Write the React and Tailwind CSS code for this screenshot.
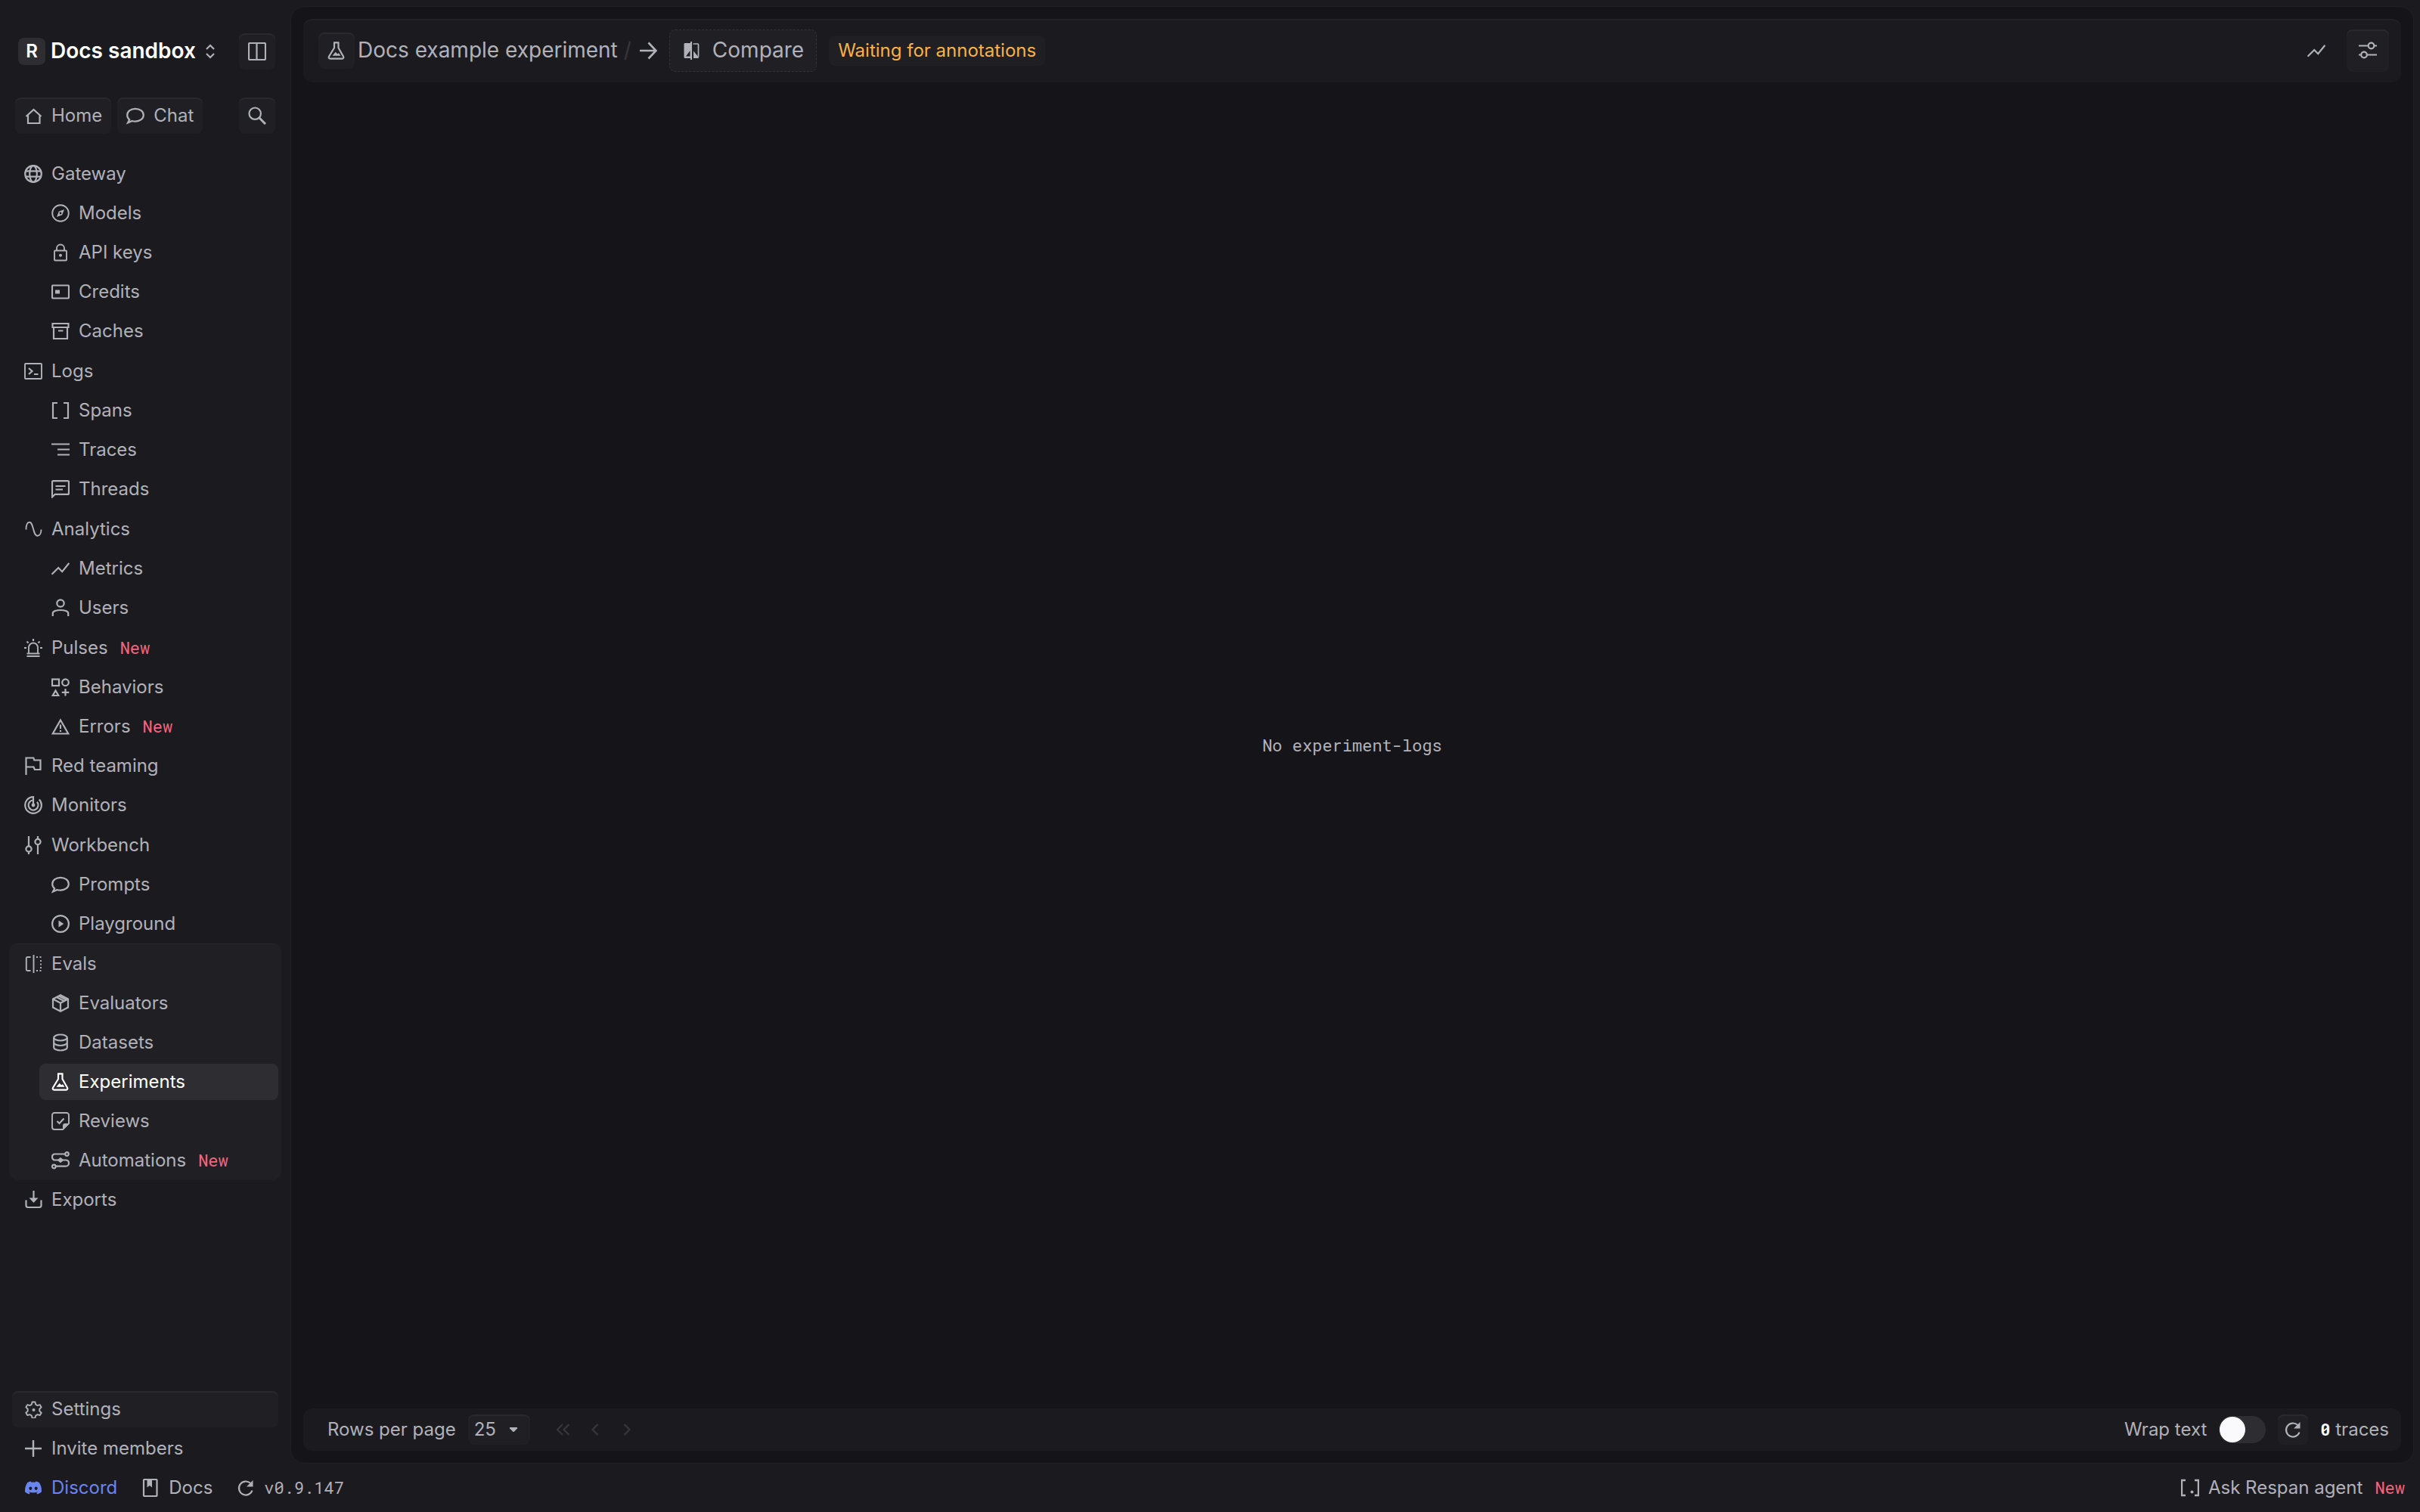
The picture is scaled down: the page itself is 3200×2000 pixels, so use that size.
import { FaDiscord } from "react-icons/fa";

const shapes = {
  panel: (
    <>
      <rect x="1" y="1" width="22" height="22" rx="1.5" />
      <path d="M11.5 1v22" />
    </>
  ),
  home: <path d="M2.5 13 12.5 4l10 9M5 11v11h15.500V11" />,
  chat: <path d="M4.200 17.300C2.300 15.700 1.200 13.500 1.200 11.200 1.200 6.300 6 2.800 12 2.800s10.800 3.500 10.800 8.400-4.800 8.400-10.800 8.400c-1.500 0-3-.2-4.300-.6L2 21.500z" />,
  search: (
    <>
      <circle cx="9.200" cy="9.200" r="7.700" />
      <path d="m15 15 8 8" strokeWidth="3" />
    </>
  ),
  globe: (
    <>
      <circle cx="12" cy="12" r="10.800" />
      <ellipse cx="12" cy="12" rx="4.800" ry="10.800" />
      <path d="M2 8.300h20M2 15.700h20" />
    </>
  ),
  compass: (
    <>
      <circle cx="12" cy="12" r="10.800" strokeWidth="1.900" />
      <path d="m17 7-2.800 7.200L7 17l2.800-7.200z" fill="currentColor" stroke="none" />
      <circle cx="12" cy="12" r="1.400" fill="#1b1b1f" stroke="none" />
    </>
  ),
  lock: (
    <>
      <rect x="4" y="9.500" width="16" height="13" rx="1" strokeWidth="1.900" />
      <path d="M7 9.500V6.500a5 5 0 0 1 10 0v3" strokeWidth="1.900" />
      <circle cx="12" cy="15.800" r="2" fill="currentColor" stroke="none" />
    </>
  ),
  credit: (
    <>
      <rect x="1" y="3.500" width="22" height="17" rx="1.200" />
      <rect x="5" y="9.500" width="6" height="5" rx=".5" fill="currentColor" stroke="none" />
    </>
  ),
  archive: <path d="M1.500 2h21v5h-21zM3 7v15h18V7M9 11.500h6.500" />,
  terminal: (
    <>
      <rect x="1" y="2" width="22" height="20" rx="1" strokeWidth="1.900" />
      <path d="m6 8 4.500 4L6 16M13 16h5.500" />
    </>
  ),
  brackets: <path d="M8 2H2v20h6M16 2h6v20h-6" />,
  traces: <path d="M0 4.500h24M8 11.500h16M8 18.500h16" />,
  threads: (
    <>
      <path d="M1 22.500V2.500C1 1.700 1.500 1.200 2.300 1.200h19.400c.8 0 1.300.5 1.300 1.300v15c0 .8-.5 1.300-1.300 1.300H4.800z" />
      <path d="M5.500 8h13M5.500 12.500h9.500" />
    </>
  ),
  wave: <path d="M2.500 12.500C2.500 6 4.500 2.700 7 2.700c5.500 0 4.500 18 10.500 18 2.800 0 5-3 5-8.200" strokeWidth="1.900" />,
  trend: <path d="m1.200 19 8-8 5 5.200L22.800 5.500" strokeLinecap="round" />,
  user: (
    <>
      <circle cx="12" cy="6" r="4.700" />
      <path d="M1.800 23v-4c0-2.500 5-4 10.200-4s10.200 1.500 10.200 4v4" />
    </>
  ),
  siren: (
    <>
      <path d="M6 19v-7.500a6 6 0 0 1 12 0V19M3.500 19.500h17M3.500 23h17" strokeWidth="1.900" />
      <path d="M12 0v3M0 12h3M21 12h3M3.500 3.500l2 2M20.500 3.500l-2 2" />
    </>
  ),
  shapes: (
    <>
      <rect x="1" y="1.500" width="9" height="8.500" />
      <circle cx="18.500" cy="5.700" r="4.300" />
      <path d="M5.500 16.500 9.300 23H1.700zM18.500 14v9.500M13.800 18.800h9.500" />
    </>
  ),
  warning: (
    <>
      <path d="M12 3.500 22.300 21.500H1.700z" />
      <path d="M12 9.500v5.500M12 16.800V19" />
    </>
  ),
  flag: <path d="M2.500 24V1.500h9.800l1 3h8.200V17h-7.700l-1.300-3.500h-10" />,
  radar: (
    <>
      <path d="M12 12V1.200a10.800 10.800 0 1 0 7.800 3.300" />
      <path d="M12 5.500a6.500 6.500 0 1 0 5 2.300" />
      <circle cx="12" cy="12" r="2.400" fill="currentColor" stroke="none" />
    </>
  ),
  workbench: (
    <>
      <circle cx="6" cy="17" r="3.600" />
      <circle cx="18" cy="7.500" r="3.600" />
      <path d="M6 0v13.400M6 20.600V24M18 0v3.900M18 11.100V24" />
    </>
  ),
  play: (
    <>
      <circle cx="12" cy="12" r="10.900" />
      <path d="M9.500 7.500v9l6.800-4.500z" fill="currentColor" stroke="none" />
    </>
  ),
  evals: (
    <>
      <path d="M8.500 3H4.300C3.500 3 2.800 3.600 2.800 4.500v15c0 .9.700 1.500 1.500 1.500h4.200M12.500 0v24" strokeWidth="1.900" />
      <path d="M16 3h7M16 21h7M22 7v11" strokeWidth="1.900" strokeDasharray="2 2.500" />
    </>
  ),
  cube: (
    <>
      <path d="M12 1.300 22 6.500v11L12 22.700 2 17.500v-11zM2 6.500l10 5.300 10-5.300M12 11.800v10.900" />
      <path d="m6.800 4 10.200 5.300M10 2.500l9.500 5" />
    </>
  ),
  database: (
    <>
      <ellipse cx="12" cy="5.500" rx="8.800" ry="4" />
      <path d="M3.200 5.500v13c0 2.200 4 4 8.800 4s8.800-1.800 8.800-4v-13M3.200 12c0 2.200 4 4 8.800 4s8.800-1.800 8.800-4" />
    </>
  ),
  flask: (
    <>
      <path d="M8 1.300h7.500M9 1.500v6.800L2 19.800c-.8 1.500 0 2.800 1.500 2.800h16c1.500 0 2.300-1.300 1.500-2.800L14.500 8.300V1.500" />
      <path d="m6.500 18.800 4.200-5 2.300 2.400 2-.9 2.500 3.500z" fill="currentColor" stroke="none" />
    </>
  ),
  review: (
    <>
      <path d="M23 15V4a3 3 0 0 0-3-3H4a3 3 0 0 0-3 3v16a3 3 0 0 0 3 3h11z" strokeWidth="1.900" />
      <path d="M23 15v1l-7 7h-1v-5a3 3 0 0 1 3-3z" fill="currentColor" stroke="none" />
      <path d="m7.500 12 3 3 6-6.500" />
    </>
  ),
  automation: (
    <>
      <path d="M18 3.500H4.500a3.500 3.500 0 0 0-3.500 3.500c0 2.800 1.500 4.500 4 4.500h14c2.500 0 4 1.500 4 4.200a4 4 0 0 1-4 4H6" />
      <circle cx="20.500" cy="3.500" r="2.300" />
      <circle cx="3.300" cy="20" r="2.300" />
      <path d="m12 8 4.500 3.600-4.500 3.600-4.500-3.600z" fill="currentColor" stroke="none" />
    </>
  ),
  download: (
    <>
      <path d="M2.500 12.500v7a2.500 2.500 0 0 0 2.500 2.500h15a2.500 2.500 0 0 0 2.500-2.500v-7M12.500 0v11" />
      <path d="M6.500 9.500h12l-6 6.500z" fill="currentColor" stroke="none" />
    </>
  ),
  gear: (
    <>
      <path d="m10.600 2.500 3.800 0 .8 3.200 2.400 1.400 3.200-.9 1.900 3.200-2.400 2.300v2.800l2.400 2.300-1.900 3.200-3.200-.9-2.400 1.400-.8 3.200h-3.800l-.8-3.200-2.400-1.400-3.200.9-1.900-3.200 2.400-2.300v-2.800L2.300 9.400l1.900-3.200 3.200.9 2.400-1.400z" strokeWidth="1.900" strokeLinejoin="round" />
      <circle cx="12.500" cy="13" r="2" fill="currentColor" stroke="none" />
    </>
  ),
  plus: <path d="M12 1v22M1 12h22" strokeWidth="2.400" />,
  book: (
    <>
      <rect x="3" y="1" width="17.500" height="22" rx="1" />
      <path d="M7.500 1h6.500v10.500L10.800 9l-3.300 2.500z" fill="currentColor" stroke="none" />
    </>
  ),
  refresh: (
    <>
      <path d="M20.500 15.500A9 9 0 1 1 18 5.800" />
      <path d="M21.500 2v8.500h-8.500z" fill="currentColor" stroke="none" />
    </>
  ),
  arrow: <path d="M1 12h21M12.500 1.500 22.500 12l-10 10.500" strokeWidth="2.600" />,
  compare: (
    <>
      <path d="M11 0h2v24h-2v-2H4c-1 0-1.500-.6-1.500-1.500v-17C2.500 2.600 3 2 4 2h7z" fill="currentColor" stroke="none" />
      <path d="M14.500 3h6c.8 0 1 .3 1 1v16" strokeWidth="1.700" />
      <path d="M15 12.500 22 21c0 .7-.5 1-1 1h-6z" fill="currentColor" stroke="none" />
      <path d="M5 19.500 10.500 12v7.500z" fill="#202024" stroke="none" />
    </>
  ),
  sliders: (
    <>
      <path d="M0 5.500h12.500M20.500 5.500H24M0 17.500h3M11 17.500h13" />
      <circle cx="16.500" cy="5.500" r="3.800" />
      <circle cx="7" cy="17.500" r="3.800" />
    </>
  ),
  first: <path d="m11 5-7 7 7 7M19.500 5l-7 7 7 7" />,
  prev: <path d="m15.500 5-7 7 7 7" />,
  next: <path d="m8.500 5 7 7-7 7" />,
  updown: <path d="m7 9 5-5 5 5M7 15l5 5 5-5" />,
};

function Icon({ name }) {
  return (
    <svg viewBox="0 0 24 24" fill="none" stroke="currentColor" strokeWidth="2.200" className="size-6 shrink-0" aria-hidden="true">
      {shapes[name]}
    </svg>
  );
}

const groups = [
  {
    label: "Gateway",
    icon: "globe",
    items: [
      { label: "Models", icon: "compass" },
      { label: "API keys", icon: "lock" },
      { label: "Credits", icon: "credit" },
      { label: "Caches", icon: "archive" },
    ],
  },
  {
    label: "Logs",
    icon: "terminal",
    items: [
      { label: "Spans", icon: "brackets" },
      { label: "Traces", icon: "traces" },
      { label: "Threads", icon: "threads" },
    ],
  },
  {
    label: "Analytics",
    icon: "wave",
    items: [
      { label: "Metrics", icon: "trend" },
      { label: "Users", icon: "user" },
    ],
  },
  {
    label: "Pulses",
    icon: "siren",
    isNew: true,
    items: [
      { label: "Behaviors", icon: "shapes" },
      { label: "Errors", icon: "warning", isNew: true },
    ],
  },
  { label: "Red teaming", icon: "flag" },
  { label: "Monitors", icon: "radar" },
  {
    label: "Workbench",
    icon: "workbench",
    items: [
      { label: "Prompts", icon: "chat" },
      { label: "Playground", icon: "play" },
    ],
  },
  {
    label: "Evals",
    icon: "evals",
    open: true,
    items: [
      { label: "Evaluators", icon: "cube" },
      { label: "Datasets", icon: "database" },
      { label: "Experiments", icon: "flask", active: true },
      { label: "Reviews", icon: "review" },
      { label: "Automations", icon: "automation", isNew: true },
    ],
  },
  { label: "Exports", icon: "download" },
];

const mono = "font-['Roboto_Mono','Liberation_Mono',monospace] text-[22px]";
const raised = "rounded-lg bg-[#202024] shadow-[inset_0_2px_0_#2a2a2e]";

function NewTag() {
  return <span className={`ml-1 text-[#f6647f] ${mono}`}>New</span>;
}

function NavGroup({ group }) {
  const border = group.open ? "border-t border-[#29292d] bg-[#202024]" : group.items ? "border-t border-transparent" : "";
  return (
    <li className={`rounded-xl ${border}`}>
      <a href="#" className="flex h-[52px] items-center gap-3 pl-5">
        <Icon name={group.icon} />
        {group.label}
        {group.isNew && <NewTag />}
      </a>
      {group.items && (
        <ul className="pr-1 pl-10">
          {group.items.map((item) => (
            <li key={item.label} className="py-0.5">
              <a
                href="#"
                aria-current={item.active ? "page" : undefined}
                className={`flex h-12 items-center gap-3 rounded-lg pl-4 ${item.active ? "bg-[#2e2e32] text-white" : ""}`}
              >
                <Icon name={item.icon} />
                {item.label}
                {item.isNew && <NewTag />}
              </a>
            </li>
          ))}
        </ul>
      )}
    </li>
  );
}

function Sidebar() {
  return (
    <aside className="flex w-96 shrink-0 flex-col px-3 pt-11">
      <div className="flex items-center justify-between px-2">
        <button className="flex h-12 items-center gap-[7px] pl-1 text-[28px] font-semibold text-white">
          <span className="flex size-9 items-center justify-center rounded-lg bg-[#2e2e32] text-2xl font-semibold">R</span>
          Docs sandbox
          <span className="text-[#b1b1ba]">
            <Icon name="updown" />
          </span>
        </button>
        <button aria-label="Toggle sidebar" className={`flex size-12 items-center justify-center ${raised}`}>
          <Icon name="panel" />
        </button>
      </div>
      <div className="mt-[37px] flex gap-2 px-2">
        <a href="#" className={`flex h-12 items-center gap-3 px-3 ${raised}`}>
          <Icon name="home" />
          Home
        </a>
        <a href="#" className={`flex h-12 items-center gap-3 px-3 ${raised}`}>
          <Icon name="chat" />
          Chat
        </a>
        <button aria-label="Search" className={`ml-auto flex size-12 items-center justify-center ${raised}`}>
          <Icon name="search" />
        </button>
      </div>
      <nav className="mt-[26px]">
        <ul>
          {groups.map((group) => (
            <NavGroup key={group.label} group={group} />
          ))}
        </ul>
      </nav>
      <div className="mt-auto px-1 pt-4">
        <a href="#" className={`flex h-12 items-center gap-3 px-4 ${raised}`}>
          <Icon name="gear" />
          Settings
        </a>
        <a href="#" className="mt-2 flex h-10 items-center gap-3 px-4">
          <Icon name="plus" />
          Invite members
        </a>
      </div>
    </aside>
  );
}

function TopBar() {
  return (
    <header className="flex h-[84px] items-center rounded-xl bg-[#1b1b1f] px-4 shadow-[inset_0_2px_0_#212125]">
      <span className={`ml-1 flex size-12 items-center justify-center ${raised}`}>
        <Icon name="flask" />
      </span>
      <h1 className="ml-1 text-[28px]">Docs example experiment</h1>
      <span className="ml-2 text-[28px] text-[#36363b]">/</span>
      <span className="mr-3 ml-1.5 flex w-8 justify-center">
        <Icon name="arrow" />
      </span>
      <button className="flex h-14 items-center gap-4 rounded-lg border border-dashed border-[#333338] bg-[#202024] px-4 text-[28px]">
        <Icon name="compare" />
        Compare
      </button>
      <span className="ml-4 flex h-10 items-center rounded-lg bg-[#202024] px-3 text-[#fcb045]">Waiting for annotations</span>
      <button aria-label="Show chart" className="ml-auto flex size-14 items-center justify-center">
        <Icon name="trend" />
      </button>
      <button aria-label="View options" className={`ml-3 flex size-14 items-center justify-center ${raised}`}>
        <Icon name="sliders" />
      </button>
    </header>
  );
}

function TableFooter() {
  return (
    <div className="flex h-14 items-center rounded-xl bg-[#1b1b1f] px-4">
      <label htmlFor="rows" className="ml-4">
        Rows per page
      </label>
      <div className="relative ml-4">
        <select id="rows" defaultValue="25" className={`h-10 w-[82px] appearance-none pl-2 ${raised}`}>
          <option>25</option>
          <option>50</option>
          <option>100</option>
        </select>
        <svg viewBox="0 0 12 8" className="pointer-events-none absolute top-4 right-4 h-2 w-3" fill="currentColor" aria-hidden="true">
          <path d="M1 1h10v1.500L6.500 7h-1L1 2.500z" />
        </svg>
      </div>
      <div className="ml-8 flex gap-[18px] text-[#36363b]">
        <button aria-label="First page" disabled>
          <Icon name="first" />
        </button>
        <button aria-label="Previous page" disabled>
          <Icon name="prev" />
        </button>
        <button aria-label="Next page" disabled>
          <Icon name="next" />
        </button>
      </div>
      <label htmlFor="wrap" className="ml-auto">
        Wrap text
      </label>
      <input
        id="wrap"
        type="checkbox"
        role="switch"
        className="ml-4 h-9 w-[62px] appearance-none rounded-full bg-[#2e2e32] p-px before:block before:size-[34px] before:rounded-full before:bg-[#fafafc]"
      />
      <button aria-label="Refresh" className={`ml-4 flex size-10 items-center justify-center ${raised}`}>
        <Icon name="refresh" />
      </button>
      <p className="ml-4">
        <span className={`font-bold text-white ${mono}`}>0</span> traces
      </p>
    </div>
  );
}

export default function App() {
  return (
    <div className="flex min-h-screen flex-col bg-[#1b1b1f] font-['Inter',sans-serif] text-2xl text-[#b1b1ba]">
      <div className="flex grow">
        <Sidebar />
        <main className="mt-2 mr-2 flex grow flex-col rounded-[20px] border border-[#212125] bg-[#151519] p-4">
          <TopBar />
          <p className={`flex grow items-center justify-center ${mono}`}>No experiment-logs</p>
          <TableFooter />
        </main>
      </div>
      <footer className="flex h-16 items-center px-8">
        <a href="#" className="flex items-center gap-3 text-[#6a84f0]">
          <FaDiscord className="size-6" />
          Discord
        </a>
        <a href="#" className="ml-8 flex items-center gap-3">
          <Icon name="book" />
          Docs
        </a>
        <a href="#" className="ml-8 flex items-center gap-3">
          <Icon name="refresh" />
          <span className={mono}>v0.9.147</span>
        </a>
        <button className="-mr-3 ml-auto flex items-center gap-3">
          <svg viewBox="0 0 24 24" fill="none" stroke="currentColor" strokeWidth="2.400" className="size-6" aria-hidden="true">
            <path d="M6 2H1v20h5M18 2h5v20h-5" />
            <circle cx="14.500" cy="17.500" r="2" fill="currentColor" stroke="none" />
          </svg>
          Ask Respan agent
          <NewTag />
        </button>
      </footer>
    </div>
  );
}
